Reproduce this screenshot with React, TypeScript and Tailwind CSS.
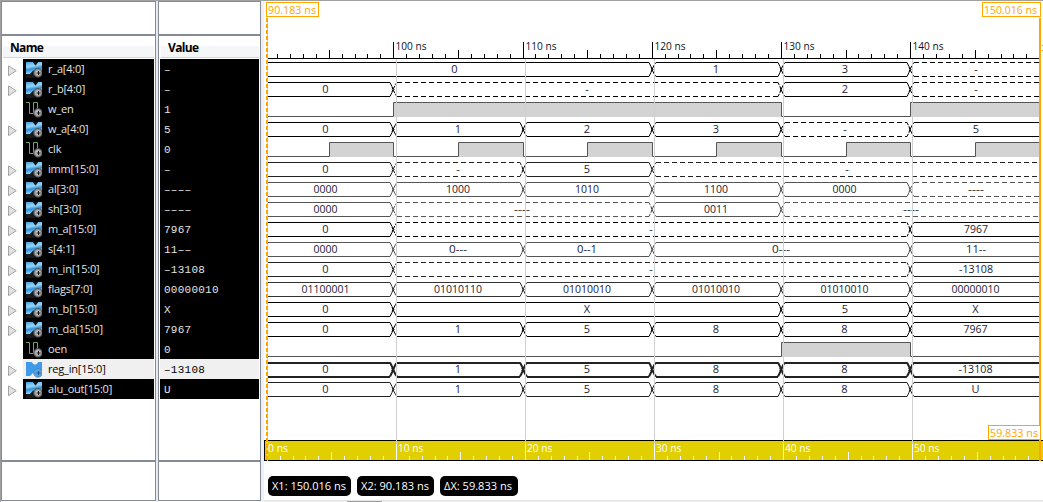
type Segment = { from: number; to: number; label: string; at: number; dashed?: boolean };
type Signal = {
  name: string;
  value: string;
  bus?: Segment[];
  edges?: number[];
  high?: boolean;
  color?: string;
  selected?: boolean;
};

const S = (from: number, to: number, label: string, at: number, dashed = false): Segment => ({
  from, to, label, at, dashed,
});

const START = 267;
const A = 393;
const B = 523;
const C = 652;
const D = 781;
const E = 910;
const END = 1040;

const five = (l: string[], first = '0') => [
  S(START, A, first, 325.5),
  S(A, B, l[0], 458),
  S(B, C, l[1], 587),
  S(C, D, l[2], 716),
  S(D, E, l[3], 844.5),
  S(E, END, l[4], 975.5),
];

const signals: Signal[] = [
  { name: 'r_a[4:0]', value: '-', bus: [S(START, C, '0', 454.5), S(C, D, '1', 716), S(D, E, '3', 845), S(E, END, '-', 976, true)] },
  { name: 'r_b[4:0]', value: '-', bus: [S(START, A, '0', 325.5), S(A, D, '-', 587, true), S(D, E, '2', 845), S(E, END, '-', 976, true)] },
  { name: 'w_en', value: '1', edges: [A, D, E] },
  { name: 'w_a[4:0]', value: '5', bus: [S(START, A, '0', 325.5), S(A, B, '1', 458), S(B, C, '2', 587), S(C, D, '3', 716), S(D, E, '-', 845, true), S(E, END, '5', 976)] },
  { name: 'clk', value: '0', edges: [329, A, 458, B, 587, C, 716, D, 846, E, 975] },
  { name: 'imm[15:0]', value: '-', color: '#222222', bus: [S(START, A, '0', 325.5), S(A, B, '-', 458, true), S(B, C, '5', 587), S(C, END, '-', 847, true)] },
  { name: 'al[3:0]', value: '----', color: '#555555', bus: [S(START, A, '0000', 325.5), S(A, B, '1000', 458), S(B, C, '1010', 587), S(C, D, '1100', 716), S(D, E, '0000', 844.5), S(E, END, '----', 976, true)] },
  { name: 'sh[3:0]', value: '----', color: '#555555', bus: [S(START, A, '0000', 325.5), S(A, C, '----', 522, true), S(C, D, '0011', 716), S(D, END, '----', 911, true)] },
  { name: 'm_a[15:0]', value: '7967', bus: [S(START, A, '0', 325.5), S(A, E, '-', 651, true), S(E, END, '7967', 976)] },
  { name: 's[4:1]', value: '11--', color: '#555555', bus: [S(START, A, '0000', 325.5), S(A, B, '0---', 458), S(B, C, '0--1', 587), S(C, E, '0---', 781), S(E, END, '11--', 976)] },
  { name: 'm_in[15:0]', value: '-13108', color: '#222222', bus: [S(START, A, '0', 325.5), S(A, E, '-', 651, true), S(E, END, '-13108', 976)] },
  { name: 'flags[7:0]', value: '00000010', color: '#333333', bus: five(['01010110', '01010010', '01010010', '01010010', '00000010'], '01100001') },
  { name: 'm_b[15:0]', value: 'X', bus: [S(START, A, '0', 325.5), S(A, D, 'X', 587), S(D, E, '5', 845), S(E, END, 'X', 975.5)] },
  { name: 'm_da[15:0]', value: '7967', bus: five(['1', '5', '8', '8', '7967']) },
  { name: 'oen', value: '0', edges: [D, E] },
  { name: 'reg_in[15:0]', value: '-13108', color: '#222222', selected: true, bus: five(['1', '5', '8', '8', '-13108']) },
  { name: 'alu_out[15:0]', value: 'U', color: '#222222', bus: five(['1', '5', '8', '8', 'U']) },
];

const gridLines = [396, 525, 654, 783, 912];
const majorTicks = [A, B, C, D, E];

const labelWidth = (s: string) =>
  [...s].reduce((w, c) => w + (c === '-' ? 4 : 6), 0);

function BusIcon({ selected }: { selected?: boolean }) {
  return (
    <svg width="16" height="16" viewBox="0 0 16 16" className="block shrink-0">
      <defs>
        <linearGradient id="busBlue" x1="0.2" y1="0" x2="0.45" y2="1">
          <stop offset="0" stopColor="#4aa6e2" />
          <stop offset="0.35" stopColor="#9bd6f7" />
          <stop offset="0.6" stopColor="#2f93dc" />
          <stop offset="1" stopColor="#b5e4fb" />
        </linearGradient>
        <radialGradient id="badgeGray">
          <stop offset="0" stopColor="#e8e8e8" />
          <stop offset="0.6" stopColor="#a8a8a8" />
          <stop offset="1" stopColor="#666666" />
        </radialGradient>
      </defs>
      {selected
        ? <path d="M0 0H5.500L8 2.500H10L12.500 0H16V12H9L7.500 10.500L4 14H0Z" fill="#3e9bea" />
        : <path d="M0 0H7L9.500 3.500L12 0H16V10H9L7.500 8.500L4 12H0Z" fill="url(#busBlue)" />}
      {!selected && <path d="M7 0H12L9.500 3.500Z M0 12H4L7.500 8.500L9 16H0Z" fill="#171b20" />}
      <circle cx="12" cy="10.800" r="4.400" fill={selected ? '#5b9fdd' : 'url(#badgeGray)'} stroke={selected ? '#3b85c8' : '#4c4c4c'} strokeWidth="0.700" />
      <path d="M12.500 9V13M10.500 11H14.500" stroke={selected ? '#205b9a' : '#111111'} strokeWidth="1" />
    </svg>
  );
}

function WireIcon() {
  return (
    <svg width="16" height="16" viewBox="0 0 16 16" className="block shrink-0">
      <path d="M0 .5H3.500V11.500H7.500V.5H11.500V8" fill="none" stroke="#72aa59" />
      <circle cx="12" cy="10.800" r="4.400" fill="url(#badgeGray)" stroke="#4c4c4c" strokeWidth="0.700" />
      <path d="M12.500 9V13M10.500 11H14.500" stroke="#111111" strokeWidth="1" />
    </svg>
  );
}

function Expander() {
  return (
    <svg width="9" height="12" viewBox="0 0 9 12" className="block">
      <path d="M.5 .9L8.300 5.700L.5 10.700Z" fill="#e2e2e2" stroke="#a5a5a5" />
    </svg>
  );
}

function WaveRow({ signal, index }: { signal: Signal; index: number }) {
  const top = 62.5 + index * 20;
  const bottom = top + 14;
  const mid = top + 7;
  if (signal.edges) {
    let high = false;
    let path = `M${START} ${bottom}`;
    const fills: [number, number][] = [];
    signal.edges.forEach((x, i) => {
      path += `H${x + 0.5}V${high ? bottom : top}`;
      if (!high) fills.push([x, signal.edges![i + 1] ?? END]);
      high = !high;
    });
    path += `H${END}`;
    return (
      <g>
        <path d={path} fill="none" stroke="#555555" />
        {fills.map(([a, b]) => (
          <rect key={a} x={a + 1} y={top + 0.5} width={b - a - 1} height="14" fill="#d3d3d3" />
        ))}
      </g>
    );
  }
  const color = signal.color ?? '#000000';
  return (
    <g fill="none" stroke={color} strokeWidth={signal.selected ? 2 : 1}>
      {signal.bus!.map((s) => {
        const first = s.from === START;
        const last = s.to === END;
        const l = first ? START : s.from + 4;
        const r = last ? END : s.to - 3;
        const dash = s.dashed ? '5 3' : undefined;
        return (
          <g key={s.from}>
            <path d={`M${l} ${top}H${r}`} strokeDasharray={dash} shapeRendering="crispEdges" />
            <path d={`M${l} ${bottom}H${r}`} strokeDasharray={dash} shapeRendering="crispEdges" />
            {!first && (
              <path d={`M${l} ${top}L${l - 1.5} ${top + 2}L${l - 5} ${mid + 2}M${l} ${bottom}L${l - 1.5} ${bottom - 2}L${l - 5} ${mid - 2}`} strokeDasharray={s.dashed ? '3 1' : undefined} />
            )}
            {!last && (
              <path d={`M${r} ${top}L${r + 2} ${top + 4}L${r + 4} ${mid}M${r} ${bottom}L${r + 2} ${bottom - 4}L${r + 4} ${mid}`} strokeDasharray={s.dashed ? '3 1' : undefined} />
            )}
            <text
              x={s.at} y={top + 10.5} textAnchor="middle" fill="#222233" stroke="none"
              textLength={s.label.length > 1 ? labelWidth(s.label) : undefined}
              lengthAdjust="spacingAndGlyphs"
            >
              {s.label}
            </text>
          </g>
        );
      })}
    </g>
  );
}

function Waveform() {
  const topTicks: { x: number; h: number }[] = [];
  const lowTicks: { x: number; h: number }[] = [];
  for (let t = 91; t < 150; t++) {
    if (t % 10 !== 0) topTicks.push({ x: Math.floor(393.8 + (t - 100) * 12.92), h: t % 5 === 0 ? 8 : 4 });
  }
  for (let t = 1; t < 60; t++) {
    if (t % 10 !== 0) lowTicks.push({ x: Math.floor(267.2 + t * 12.91), h: t % 5 === 0 ? 8 : 4 });
  }
  return (
    <svg width="779" height="461" viewBox="264 0 779 461" className="block [font-family:'Open_Sans','Noto_Sans',sans-serif] text-[11px]">
      <rect x="267" y="58" width="773" height="1" fill="#000" />
      {topTicks.map((t) => <rect key={t.x} x={t.x} y={58 - t.h} width="1" height={t.h} fill="#000" />)}
      {majorTicks.map((x, i) => (
        <g key={x}>
          <rect x={x} y="42" width="1" height="17" fill="#000" />
          <text x={x + 2.5} y="50" textLength="31" lengthAdjust="spacingAndGlyphs" fill="#111122">{`${100 + i * 10} ns`}</text>
        </g>
      ))}
      <rect x="1042" y="45" width="1" height="1" fill="#e09030" />
      <rect x="1042" y="50" width="1" height="1" fill="#e09030" />
      {signals.map((s, i) => <WaveRow key={s.name} signal={s} index={i} />)}
      {gridLines.map((x) => <rect key={x} x={x} y="59" width="1" height="382" fill="#d0d0d0" />)}
      <rect x="264" y="440" width="779" height="21" fill="#000" />
      <rect x="265" y="441" width="778" height="19" fill="#e1cf00" />
      {lowTicks.map((t) => <rect key={t.x} x={t.x} y={460 - t.h} width="1" height={t.h} fill="#fff" />)}
      {gridLines.map((x, i) => (
        <g key={x}>
          <rect x={x} y="440" width="1" height="4" fill="#d0d0d0" />
          <rect x={x} y="444" width="1" height="16" fill="#fff" />
          <text x={x + 2} y="452" textLength="25.500" lengthAdjust="spacingAndGlyphs" fill="#fff">{`${(i + 1) * 10} ns`}</text>
        </g>
      ))}
      <text x="268" y="452" textLength="20" lengthAdjust="spacingAndGlyphs" fill="#fff">0 ns</text>
      <path d="M267 18V461" stroke="#ffa500" strokeWidth="2" strokeDasharray="4 2" />
      <path d="M267.500 18V461" stroke="#d0d0d0" strokeWidth="1" strokeDasharray="2 4" strokeDashoffset="2" />
      <rect x="1039" y="18" width="2" height="443" fill="#ffa500" />
    </svg>
  );
}

function TextFit({ text, width, color, size = 11 }: { text: string; width: number; color: string; size?: number }) {
  return (
    <svg width={width} height="14" className="block overflow-visible [font-family:'Open_Sans','Noto_Sans',sans-serif]">
      <text x="0" y="10.500" fontSize={size} fill={color} textLength={width} lengthAdjust="spacingAndGlyphs">{text}</text>
    </svg>
  );
}

function Header({ text }: { text: string }) {
  return (
    <div className="mx-px flex h-[22px] shrink-0 items-center border-b border-[#d5d5d5] bg-linear-to-b from-white from-45% to-[#f5f6f7] to-50% pl-[7px] pt-[2px] text-[12px] font-bold tracking-[-0.65px] text-black [font-family:'Open_Sans','Noto_Sans',sans-serif]">
      {text}
    </div>
  );
}

export default function App() {
  return (
    <div className="flex h-[502px] w-[1043px] overflow-hidden border-t border-[#a0a0a0] bg-white">
      <div className="w-px shrink-0 bg-[#a0a0a0]" />
      <div className="flex h-[500px] w-[155px] shrink-0 flex-col border border-[#858b96] bg-white">
        <div className="h-[34px] shrink-0 border-b-2 border-[#858b96]" />
        <Header text="Name" />
        <div className="h-px shrink-0" />
        <div className="h-[401px] shrink-0">
          {signals.map((s) => (
            <div key={s.name} className="flex h-5">
              <div className="flex w-[21px] shrink-0 items-center pl-1.5 pt-1">{s.bus && <Expander />}</div>
              <div className={`mr-px flex grow items-start gap-[6px] pl-[3px] ${s.selected ? 'bg-[#f0f0f0] text-black' : 'bg-black text-[#e4e4e4]'}`}>
                <div className="pt-[3px]">{s.bus ? <BusIcon selected={s.selected} /> : <WireIcon />}</div>
                <span className="text-[11px] leading-5 tracking-[-0.2px] [font-family:'Open_Sans','Noto_Sans',sans-serif]">{s.name}</span>
              </div>
            </div>
          ))}
        </div>
        <div className="h-[2px] shrink-0 bg-[#858b96]" />
      </div>
      <div className="w-[2px] shrink-0 bg-[#e7ebf1]" />
      <div className="flex h-[500px] w-[103px] shrink-0 flex-col border border-[#858b96] bg-white">
        <div className="h-[34px] shrink-0 border-b-2 border-[#858b96]" />
        <div className="shrink-0 pl-px"><Header text="Value" /></div>
        <div className="h-px shrink-0" />
        <div className="h-[401px] shrink-0 pl-px">
          {signals.map((s) => (
            <div key={s.name} className={`mr-px h-5 pl-1 text-[11px] leading-[23px] tracking-[0.25px] [font-family:'Liberation_Mono',monospace] ${s.selected ? 'bg-[#f0f0f0] text-black' : 'bg-black text-[#e4e4e4]'}`}>
              {s.value.replaceAll('-', '\u2013')}
            </div>
          ))}
        </div>
        <div className="h-[2px] shrink-0 bg-[#858b96]" />
      </div>
      <div className="w-[3px] shrink-0 bg-[#eff0f2]" />
      <div className="relative -mt-px flex h-[502px] w-[779px] shrink-0 flex-col border-[#a0a0a0]">
        <Waveform />
        <div className="mt-[15px] flex h-[20px] shrink-0 gap-[6px] pl-1">
          <div className="flex w-[83px] items-center rounded-[5px] bg-black pl-1"><TextFit text="X1: 150.016 ns" width={74} color="#fff" /></div>
          <div className="flex w-[77px] items-center rounded-[5px] bg-black pl-1"><TextFit text="X2: 90.183 ns" width={68} color="#fff" /></div>
          <div className="flex w-[78px] items-center rounded-[5px] bg-black pl-1"><TextFit text="ΔX: 59.833 ns" width={68} color="#fff" /></div>
        </div>
        <div className="mt-[4px] h-px shrink-0 bg-[#e3e3e3]" />
        <div className="h-px shrink-0 bg-[#f0f0f0] pl-[83px]"><div className="h-px w-[35px] bg-[#a0a0a0]" /></div>
        <div className="absolute left-0 top-0 h-px w-full bg-[#a0a0a0]" />
        <div className="absolute left-[2px] top-[2px] flex h-[15px] w-[53px] items-center border border-[#ffa500] bg-white pl-px"><TextFit text="90.183 ns" width={48} color="#ffa500" /></div>
        <div className="absolute left-[718px] top-[2px] flex h-[15px] w-[59px] items-center border border-[#ffa500] bg-white pl-px"><TextFit text="150.016 ns" width={53} color="#ffa500" /></div>
        <div className="absolute left-[724px] top-[425px] flex h-[15px] w-[53px] items-center border border-[#ffa500] bg-white pl-px"><TextFit text="59.833 ns" width={48} color="#ffa500" /></div>
      </div>
    </div>
  );
}
